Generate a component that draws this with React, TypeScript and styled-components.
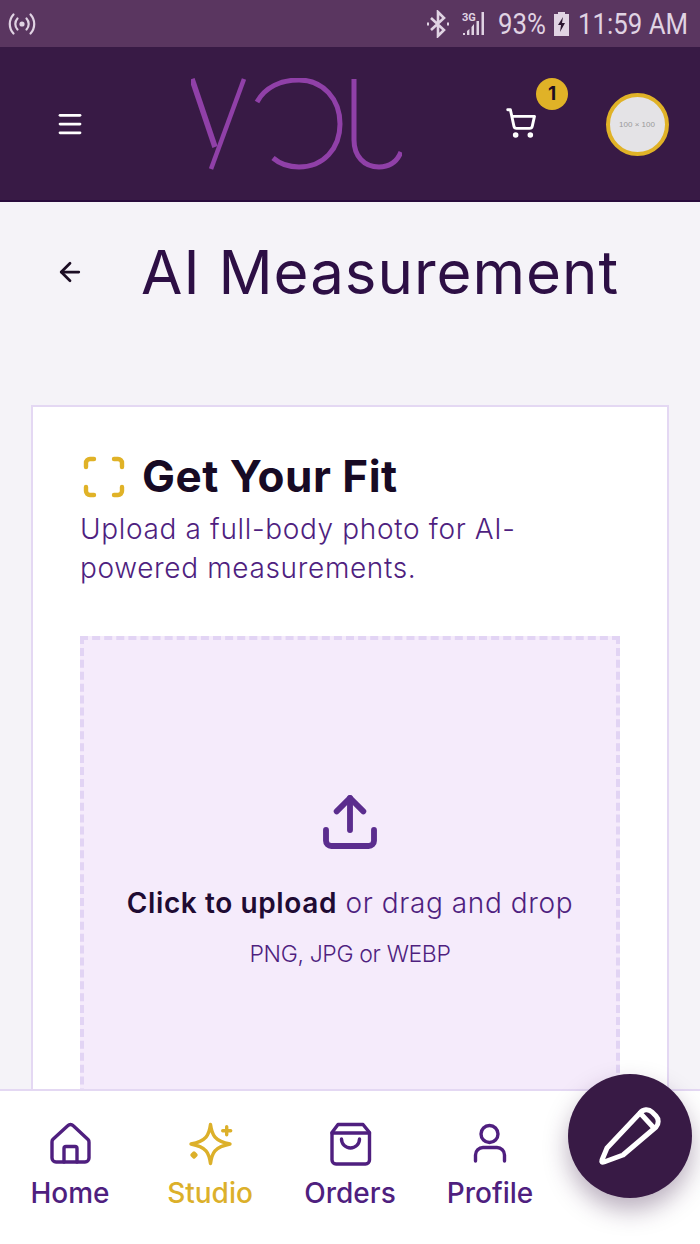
import React from "react";
import styled, { createGlobalStyle } from "styled-components";
import { ArrowLeft, Menu, Scan, ShoppingCart, Upload } from "lucide-react";

const Global = createGlobalStyle`
  html, body { margin: 0; padding: 0; background: #f5f3f8; }
  * { box-sizing: border-box; }
`;
const Screen = styled.div`
  position: relative; width: 700px; height: 1244px; overflow: hidden;
  display: flex; flex-direction: column; background: #f5f3f8;
  font-family: Inter, "Liberation Sans", sans-serif; color: #4f1f7f;
`;
const StatusBar = styled.div`
  flex: 0 0 47px; background: #5a3660; color: #e0d3e3; display: flex; align-items: center;
  justify-content: space-between; padding: 0 12px 0 8px; font-family: Roboto, sans-serif;
`;
const StatusRight = styled.div`display: flex; align-items: center;`;
const StatusGap = styled.span<{ $w: number }>`display: inline-block; width: ${p => p.$w}px;`;
const StatusText = styled.span<{ $w: number; $ml: number }>`
  display: inline-block; width: ${p => p.$w}px; margin-left: ${p => p.$ml}px;
  font-size: 30px; line-height: 47px; white-space: nowrap;
  transform: scaleX(0.86); transform-origin: left center;
`;
const Header = styled.header`
  flex: 0 0 155px; background: #381a45; border-bottom: 2px solid #2a0c3d; display: grid;
  grid-template-columns: 140px 1fr 110px 110px; align-items: center; color: #fff;
`;
const HeaderCell = styled.div`display: flex; justify-content: center; align-items: center;`;
const LogoCell = styled(HeaderCell)`margin-right: 28px; padding-top: 1px;`;
const CartWrap = styled.div`position: relative; display: flex; width: 34px; height: 34px; margin-left: -26px;`;
const Badge = styled.span`
  position: absolute; left: 31px; top: -29px; width: 32px; height: 32px; border-radius: 50%;
  background: #e0b227; color: #1c0d24; font-size: 19px; font-weight: 700;
  display: flex; align-items: center; justify-content: center;
`;
const AvatarCell = styled(HeaderCell)`padding-top: 2px;`;
const Avatar = styled.div`
  width: 63px; height: 63px; border-radius: 50%; border: 4px solid #e0b227; background: #e4e3e6;
  color: #9a9a9a; font-size: 8px; display: flex; align-items: center; justify-content: center;
  font-family: "Liberation Sans", sans-serif; margin-left: -16px;
`;
const Main = styled.main`flex: 1; min-height: 0; overflow: hidden; padding: 0 31px;`;
const TitleRow = styled.div`display: flex; align-items: center; height: 140px; margin-bottom: 63px;`;
const BackButton = styled.div`display: flex; width: 110px; padding-left: 24px; color: #1c0d24;`;
const Title = styled.h1`
  margin: 0; font-size: 60px; font-weight: 400; letter-spacing: 1px; color: #2d0f45; white-space: nowrap;
`;
const Card = styled.section`
  background: #fff; border: 2px solid #e4d8f3; padding: 46px 47px 0; height: 800px;
`;
const CardHead = styled.div`display: flex; align-items: center; gap: 14px; height: 48px; color: #e0b227;`;
const CardTitle = styled.h2`
  margin: -3px 0 0; font-size: 44px; font-weight: 700; letter-spacing: 0.5px; color: #170a24; white-space: nowrap;
`;
const Lead = styled.p`
  margin: 9px 0 0; font-size: 28px; line-height: 39px; letter-spacing: 0.65px; color: #4f1f7f; width: 470px; font-weight: 300;
`;
const Drop = styled.div`
  margin-top: 48px; height: 520px; background: #f5ebfb; border: 4px dashed #e2d4f4;
  display: flex; flex-direction: column; align-items: center; padding-top: 150px; color: #5b2d8e;
`;
const DropText = styled.div`margin-top: 29px; font-size: 28px; line-height: 40px; letter-spacing: 0.6px; color: #4f1f7f; font-weight: 300; white-space: nowrap;`;
const DropStrong = styled.strong`font-weight: 600; color: #1f0b33;`;
const DropHint = styled.div`margin-top: 16px; font-size: 23px; line-height: 30px; letter-spacing: -0.35px; color: #4f1f7f; font-weight: 300;`;
const Nav = styled.nav`
  flex: 0 0 155px; background: #fff; border-top: 2px solid #e4d8f3;
  display: grid; grid-template-columns: repeat(5, 140px); padding-top: 29px;
`;
const NavItem = styled.div<{ $active?: boolean }>`
  display: flex; flex-direction: column; align-items: center; gap: 7px;
  color: ${p => (p.$active ? "#dcb02a" : "#4f1f7f")};
`;
const NavLabel = styled.span`font-size: 28px; line-height: 40px; font-weight: 500;`;
const NavIcon = styled.svg.attrs({ viewBox: "0 0 46 46", fill: "none", stroke: "currentColor" })`
  width: 46px; height: 46px; stroke-width: 3.4px; stroke-linecap: round; stroke-linejoin: round;
`;
const Fab = styled.div`
  position: absolute; left: 568px; top: 1074px; width: 124px; height: 124px; border-radius: 50%;
  background: #381a45; color: #fff; display: flex; align-items: center; justify-content: center;
  box-shadow: 0 12px 24px rgba(56, 26, 69, 0.35);
`;

const Signal = () => (
  <svg width="28" height="24" viewBox="0 0 28 24" fill="none" stroke="currentColor" strokeWidth="2.2" strokeLinecap="round">
    <circle cx="14" cy="12" r="2.6" fill="currentColor" stroke="none" />
    <path d="M9.5 6.5a8 8 0 0 0 0 11M18.5 6.5a8 8 0 0 1 0 11M5.5 2.5a14 14 0 0 0 0 19M22.5 2.5a14 14 0 0 1 0 19" />
  </svg>
);
const Bluetooth = () => (
  <svg width="24" height="28" viewBox="0 0 24 28" fill="none" stroke="currentColor" strokeWidth="2.6">
    <path d="M5 8l13 12-6 6V2l6 6L5 20" />
    <path d="M1 14h2M21 14h2" strokeWidth="3" />
  </svg>
);
const Bars = () => (
  <svg width="26" height="26" viewBox="0 0 26 26" fill="currentColor">
    <text x="0" y="10" fontSize="11" fontWeight="700" fontFamily="Roboto, sans-serif">3G</text>
    <path d="M1 24h2v-2H1zM5 24h2.4v-6L5 20zM9.5 24h2.5V13l-2.5 3zM14.5 24H17V10h-2.5zM19.5 24h2.5V1h-2.5z" />
  </svg>
);
const Battery = () => (
  <svg width="17" height="26" viewBox="0 0 17 26">
    <path d="M5 1h7v2h4v22H1V3h4z" fill="currentColor" />
    <path d="M10 6l-5 8h3l-1 7 5-9H9z" fill="#2a1430" />
  </svg>
);
const Logo = () => (
  <svg width="211" height="92" viewBox="0 0 211 92" fill="none" stroke="#9040a8">
    <path d="M1 1l23 68" strokeWidth="5.5" />
    <path d="M53 1L20 91" strokeWidth="4.5" />
    <path d="M66 24C74 9 90 2 108 2c24 0 41 19 41 44s-17 43-41 43c-10 0-19-3-26-9" strokeWidth="5" />
    <path d="M163 1v61c0 16 10 27 25 27 10 0 18-5 22-15" strokeWidth="5" />
  </svg>
);
const HomeIcon = () => (
  <NavIcon>
    <path d="M21 5.5a3.5 3.5 0 0 1 5 0L41 19.5a3.5 3.5 0 0 1 1 2.7V38a4 4 0 0 1-4 4H9a4 4 0 0 1-4-4V22a3.5 3.5 0 0 1 1-2.7z" />
    <path d="M17 42V28.5a2 2 0 0 1 2-2h9a2 2 0 0 1 2 2V42" />
  </NavIcon>
);
const StudioIcon = () => (
  <NavIcon>
    <path d="M23.5 4.5C25 15 27.5 21 43 24C27.5 27 25 33 23.5 43.5C22 33 19.5 27 4 24C19.5 21 22 15 23.5 4.5Z" />
    <path d="M39.7 6.7v8M35.7 10.7h8" />
    <path d="M7 33l2 2-2 2-2-2z" fill="currentColor" />
  </NavIcon>
);
const BagIcon = () => (
  <NavIcon>
    <path d="M11 4.5h25l6.5 8V40a4 4 0 0 1-4 4H9a4 4 0 0 1-4-4V12.5z" />
    <path d="M5 13h37.5" />
    <path d="M14.5 19a9 9 0 0 0 18 0" />
  </NavIcon>
);
const UserIcon = () => (
  <NavIcon>
    <circle cx="22.5" cy="14" r="8.5" />
    <path d="M8.5 41v-6a7.5 7.5 0 0 1 7.5-7.5h14a7.5 7.5 0 0 1 7.5 7.5v6" />
  </NavIcon>
);
const PencilIcon = () => (
  <svg width="66" height="66" viewBox="0 0 66 66" fill="none" stroke="currentColor" strokeWidth="5" strokeLinejoin="round" strokeLinecap="round">
    <path d="M10 45L43 10a8 8 0 0 1 12-1l4 4a8 8 0 0 1 0 11L26 52 7 59q-3 1-2-2z" />
    <path d="M44 11l12 13" />
  </svg>
);

export default function App() {
  return (
    <Screen>
      <Global />
      <StatusBar>
        <Signal />
        <StatusRight>
          <Bluetooth />
          <StatusGap $w={12} />
          <Bars />
          <StatusText $w={55} $ml={10}>93%</StatusText>
          <Battery />
          <StatusText $w={110} $ml={8}>11:59 AM</StatusText>
        </StatusRight>
      </StatusBar>
      <Header>
        <HeaderCell><Menu size={30} strokeWidth={2.2} /></HeaderCell>
        <LogoCell><Logo /></LogoCell>
        <HeaderCell>
          <CartWrap>
            <ShoppingCart size={32} strokeWidth={2.2} />
            <Badge>1</Badge>
          </CartWrap>
        </HeaderCell>
        <AvatarCell><Avatar>100 × 100</Avatar></AvatarCell>
      </Header>
      <Main>
        <TitleRow>
          <BackButton><ArrowLeft size={30} strokeWidth={2.2} /></BackButton>
          <Title>AI Measurement</Title>
        </TitleRow>
        <Card>
          <CardHead>
            <Scan size={48} strokeWidth={2.2} />
            <CardTitle>Get Your Fit</CardTitle>
          </CardHead>
          <Lead>Upload a full-body photo for AI-powered measurements.</Lead>
          <Drop>
            <Upload size={64} strokeWidth={2.2} />
            <DropText><DropStrong>Click to upload</DropStrong> or drag and drop</DropText>
            <DropHint>PNG, JPG or WEBP</DropHint>
          </Drop>
        </Card>
      </Main>
      <Nav>
        <NavItem><HomeIcon /><NavLabel>Home</NavLabel></NavItem>
        <NavItem $active><StudioIcon /><NavLabel>Studio</NavLabel></NavItem>
        <NavItem><BagIcon /><NavLabel>Orders</NavLabel></NavItem>
        <NavItem><UserIcon /><NavLabel>Profile</NavLabel></NavItem>
      </Nav>
      <Fab><PencilIcon /></Fab>
    </Screen>
  );
}
